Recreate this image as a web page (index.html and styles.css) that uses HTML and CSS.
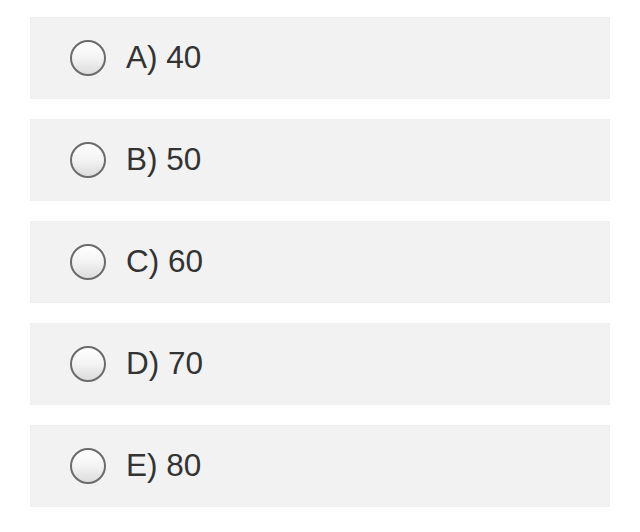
FILE: index.html
```html
<!DOCTYPE html>
<html>
<head>
<meta charset="utf-8">
<link rel="stylesheet" href="styles.css">
</head>
<body>
<div class="list">
  <label class="option"><span class="radio"></span><span class="label">A) 40</span></label>
  <label class="option"><span class="radio"></span><span class="label">B) 50</span></label>
  <label class="option"><span class="radio"></span><span class="label">C) 60</span></label>
  <label class="option"><span class="radio"></span><span class="label">D) 70</span></label>
  <label class="option"><span class="radio"></span><span class="label">E) 80</span></label>
</div>
</body>
</html>
```
FILE: styles.css
```css
html, body {
  margin: 0;
  padding: 0;
  background: #ffffff;
}
.list {
  display: flex;
  flex-direction: column;
  gap: 20px;
  padding: 17px 0 0 30px;
  width: 580px;
}
.option {
  display: flex;
  align-items: center;
  height: 82px;
  box-sizing: border-box;
  background: #f2f2f2;
  border: 1px solid #efefef;
  padding-left: 39px;
  gap: 20px;
}
.radio {
  width: 36px;
  height: 36px;
  box-sizing: border-box;
  border-radius: 50%;
  border: 2px solid #6b6b6b;
  background: linear-gradient(to bottom, #ffffff 0%, #f3f3f3 50%, #dcdcdc 100%);
  flex: none;
}
.label {
  font-family: "Liberation Sans", Arial, sans-serif;
  font-size: 31.5px;
  color: #333333;
  line-height: 1;
}
```
